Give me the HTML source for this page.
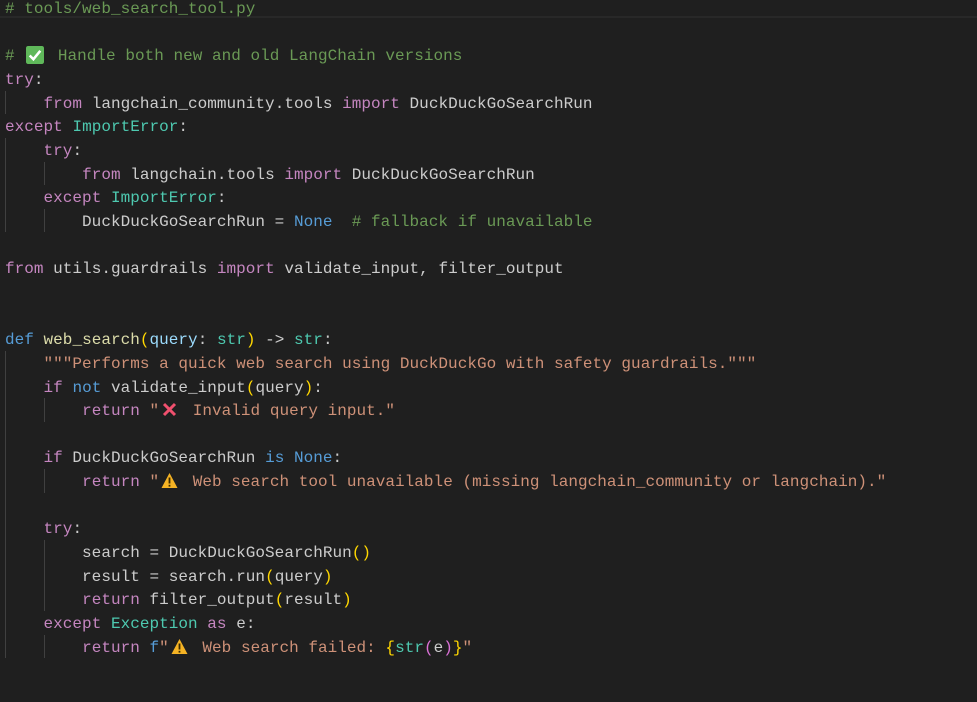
<!DOCTYPE html>
<html><head><meta charset="utf-8"><style>
body{margin:0;background:#1f1f1f;width:977px;height:702px;overflow:hidden;position:relative}
pre{position:absolute;left:5px;top:-2px;margin:0;font-family:"Liberation Mono",monospace;font-size:16px;line-height:23.65px;color:#cccccc;letter-spacing:0.03px}
.c{color:#6a9955}.k{color:#c586c0}.t{color:#4ec9b0}.f{color:#dcdcaa}.s{color:#ce9178}.b{color:#569cd6}.p{color:#9cdcfe}.y{color:#ffd700}.m{color:#da70d6}
.e{display:inline-block;width:24px;height:16px;vertical-align:-2px;position:relative}
.e svg{position:absolute;left:2px;top:0}
.g{position:absolute;width:1px;background:#404040}
.cur{position:absolute;left:0;top:-4px;width:977px;height:22px;border-bottom:2px solid #282828;box-sizing:border-box}
</style></head><body>
<div class="cur"></div>
<div class="g" style="left:5px;top:90.6px;height:23.65px"></div>
<div class="g" style="left:5px;top:137.9px;height:94.6px"></div>
<div class="g" style="left:5px;top:350.75px;height:307.45px"></div>
<div class="g" style="left:44px;top:161.55px;height:23.65px"></div>
<div class="g" style="left:44px;top:208.85px;height:23.65px"></div>
<div class="g" style="left:44px;top:398.05px;height:23.65px"></div>
<div class="g" style="left:44px;top:469px;height:23.65px"></div>
<div class="g" style="left:44px;top:539.95px;height:70.95px"></div>
<div class="g" style="left:44px;top:634.55px;height:23.65px"></div>
<pre><span class="c"># tools/web_search_tool.py</span>

<span class="c"># <span class="e"><svg width="18" height="18" viewBox="0 0 17 17"><rect x="0" y="0" width="17" height="17" rx="2" fill="#5fb85a"/><path d="M3.5 9 L7 12.5 L13.5 4.5" stroke="#fff" stroke-width="2.4" fill="none"/></svg></span> Handle both new and old LangChain versions</span>
<span class="k">try</span>:
    <span class="k">from</span> langchain_community.tools <span class="k">import</span> DuckDuckGoSearchRun
<span class="k">except</span> <span class="t">ImportError</span>:
    <span class="k">try</span>:
        <span class="k">from</span> langchain.tools <span class="k">import</span> DuckDuckGoSearchRun
    <span class="k">except</span> <span class="t">ImportError</span>:
        DuckDuckGoSearchRun = <span class="b">None</span>  <span class="c"># fallback if unavailable</span>

<span class="k">from</span> utils.guardrails <span class="k">import</span> validate_input, filter_output


<span class="b">def</span> <span class="f">web_search</span><span class="y">(</span><span class="p">query</span>: <span class="t">str</span><span class="y">)</span> -&gt; <span class="t">str</span>:
    <span class="s">"""Performs a quick web search using DuckDuckGo with safety guardrails."""</span>
    <span class="k">if</span> <span class="b">not</span> validate_input<span class="y">(</span>query<span class="y">)</span>:
        <span class="k">return</span> <span class="s">"<span class="e"><svg width="17" height="17" viewBox="0 0 17 17"><path d="M3 3 L14 14 M14 3 L3 14" stroke="#f0506e" stroke-width="3"/></svg></span> Invalid query input."</span>

    <span class="k">if</span> DuckDuckGoSearchRun <span class="b">is</span> <span class="b">None</span>:
        <span class="k">return</span> <span class="s">"<span class="e"><svg width="17" height="17" viewBox="0 0 17 17"><path d="M8.5 1 L16.5 16 L0.5 16 Z" fill="#f5b324"/><rect x="7.6" y="5.5" width="1.8" height="6" fill="#3a2a00"/><rect x="7.6" y="12.8" width="1.8" height="1.8" fill="#3a2a00"/></svg></span> Web search tool unavailable (missing langchain_community or langchain)."</span>

    <span class="k">try</span>:
        search = DuckDuckGoSearchRun<span class="y">()</span>
        result = search.run<span class="y">(</span>query<span class="y">)</span>
        <span class="k">return</span> filter_output<span class="y">(</span>result<span class="y">)</span>
    <span class="k">except</span> <span class="t">Exception</span> <span class="k">as</span> e:
        <span class="k">return</span> <span class="b">f</span><span class="s">"<span class="e"><svg width="17" height="17" viewBox="0 0 17 17"><path d="M8.5 1 L16.5 16 L0.5 16 Z" fill="#f5b324"/><rect x="7.6" y="5.5" width="1.8" height="6" fill="#3a2a00"/><rect x="7.6" y="12.8" width="1.8" height="1.8" fill="#3a2a00"/></svg></span> Web search failed: </span><span class="y">{</span><span class="t">str</span><span class="m">(</span>e<span class="m">)</span><span class="y">}</span><span class="s">"</span>
</pre>
</body></html>
